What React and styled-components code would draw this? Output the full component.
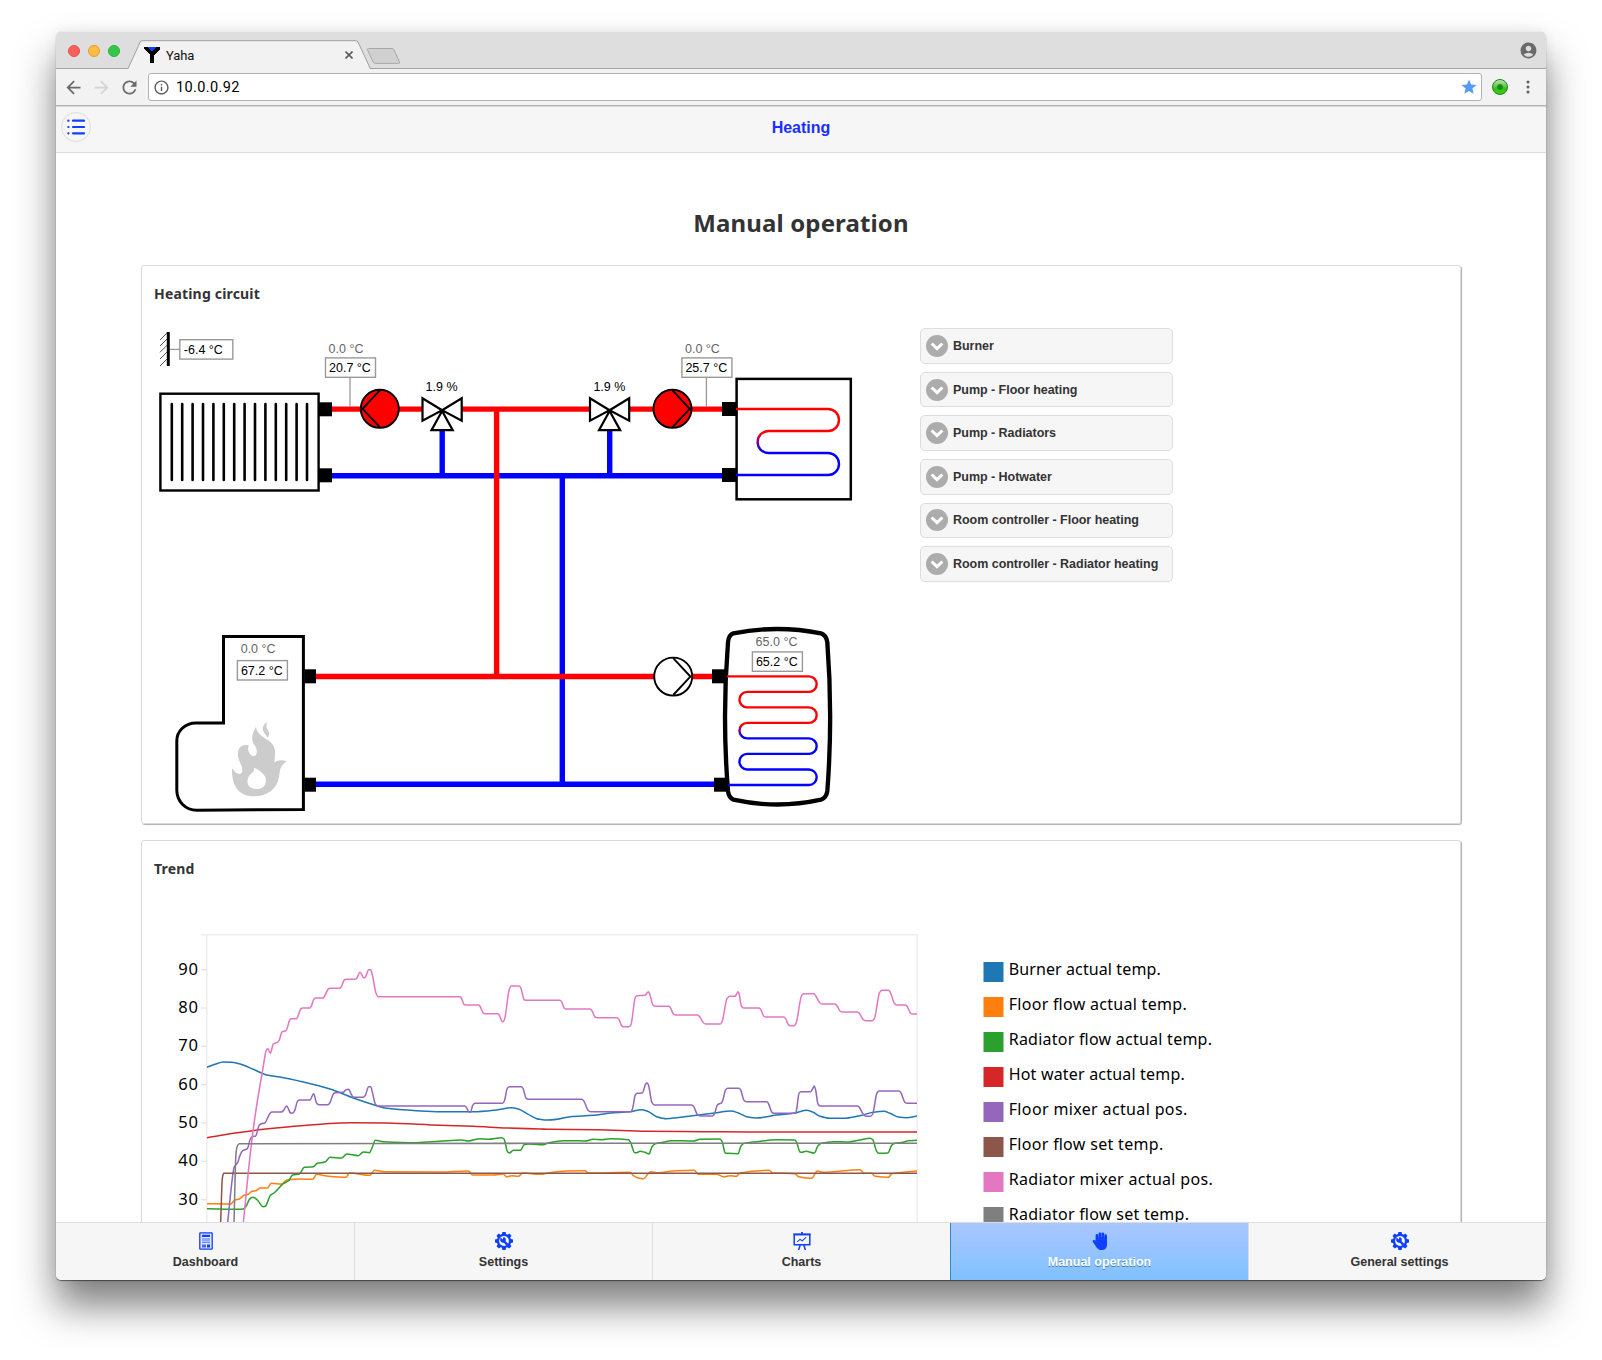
import React from "react";
import styled, { createGlobalStyle } from "styled-components";
import {
  MdArrowBack,
  MdArrowForward,
  MdRefresh,
  MdInfoOutline,
  MdStar,
  MdAccountCircle,
} from "react-icons/md";

const HELVETICA = '"Liberation Sans", Arial, sans-serif';
const LUCIDA = '"Noto Sans", "Open Sans", sans-serif';
const ACCENT = "#0f3fff";

const GlobalStyle = createGlobalStyle`
  html, body { margin: 0; padding: 0; background: #fff; }
  body { overflow: hidden; font-family: ${HELVETICA}; }
  * { box-sizing: border-box; }
  svg { display: block; flex: none; }
`;

const Desktop = styled.div`
  height: 1360px;
  padding: 31px 56px 0;
  background: #fff;
`;

const Window = styled.div`
  display: flex;
  flex-direction: column;
  width: 1490px;
  height: 1249px;
  border-radius: 6px 6px 5px 5px;
  overflow: hidden;
  background: #fff;
  box-shadow: 0 1px 1px 0 rgba(0, 0, 0, 0.5), 0 26px 38px rgba(0, 0, 0, 0.5),
    0 0 14px rgba(0, 0, 0, 0.06);
`;

/* ---------- browser chrome ---------- */

const TabStrip = styled.div`
  display: flex;
  flex: none;
  height: 38px;
  background: #dedede;
  box-shadow: inset 0 -1px 0 #a3a3a3, inset 0 1px 0 #ececec;
`;

const Lights = styled.div`
  display: flex;
  align-items: center;
  gap: 8px;
  padding: 2px 0 0 12px;
  width: 72px;
`;

const Light = styled.span`
  width: 12px;
  height: 12px;
  border-radius: 50%;
  background: ${(p) => p.$fill};
  border: 1px solid ${(p) => p.$edge};
`;

const Tab = styled.div`
  position: relative;
  display: flex;
  align-items: center;
  width: 243px;
  padding: 10px 18px 0 16px;
  font: 13px Roboto, sans-serif;
  color: #111;
`;

const TabShape = styled.svg`
  position: absolute;
  left: 0;
  top: 9px;
`;

const TabTitle = styled.span`
  position: relative;
  flex: 1;
  padding-left: 6px;
  letter-spacing: -0.1px;
`;

const TabIcon = styled.svg`
  position: relative;
`;

const NewTab = styled.svg`
  margin: 16px 0 0 -5px;
`;

const Profile = styled.div`
  display: flex;
  align-items: center;
  margin-left: auto;
  padding: 1px 8px 0 0;
  color: #6a6a6a;
`;

const Toolbar = styled.div`
  display: flex;
  align-items: center;
  flex: none;
  height: 37px;
  padding: 0 8px 0 3px;
  background: #f2f2f2;
  border-bottom: 1px solid #b4b4b4;
`;

const NavButton = styled.div`
  display: flex;
  justify-content: center;
  width: ${(p) => p.$width || 28}px;
  color: ${(p) => (p.$muted ? "#d4d4d4" : "#6a6a6a")};
`;

const Address = styled.div`
  display: flex;
  align-items: center;
  flex: 1;
  height: 28px;
  margin-left: 5px;
  padding: 0 3px 0 4px;
  background: #fff;
  border: 1px solid #b3b3b3;
  border-radius: 3px;
  color: #5c5c5c;
`;

const Url = styled.span`
  flex: 1;
  padding-left: 6px;
  font: 14.5px Roboto, sans-serif;
  letter-spacing: 0.38px;
  color: #000;
`;

const GreenDot = styled.span`
  width: 16px;
  height: 16px;
  border-radius: 50%;
  border: 1px solid #23801c;
  background: radial-gradient(circle at 50% 50%, #178a17 0 2.2px, transparent 3.6px),
    linear-gradient(#b9e8ae 0%, #74c764 40%, #2fc40c 60%, #38cf12 100%);
`;

/* ---------- application ---------- */

const AppHeader = styled.header`
  display: grid;
  grid-template-columns: 45px 1fr 45px;
  align-items: center;
  flex: none;
  height: 47px;
  padding-bottom: 4px;
  background: #f6f6f6;
  border-bottom: 1px solid #ddd;
  border-top: 1px solid #d6d6d6;
`;

const MenuButton = styled.div`
  display: flex;
  align-items: center;
  justify-content: center;
  width: 30px;
  height: 30px;
  margin: 0 0 1px 5px;
  border: 1px solid #ddd;
  border-radius: 50%;
`;

const AppTitle = styled.h1`
  margin: 1px 0 0;
  text-align: center;
  font: bold 16px ${HELVETICA};
  color: #1a2fff;
`;

const Content = styled.main`
  display: flex;
  flex-direction: column;
  gap: 16px;
  flex: 1;
  min-height: 0;
  overflow: hidden;
  padding: 0 85px;
`;

const PageTitle = styled.h2`
  flex: none;
  height: 96px;
  margin: 0;
  padding-top: 53px;
  text-align: center;
  font: bold 24px/33px ${LUCIDA};
  letter-spacing: 0.13px;
  color: #333;
`;

const Panel = styled.section`
  flex: none;
  height: ${(p) => p.$height}px;
  padding: 0 13px;
  border: 1px solid #dadada;
  border-radius: 3px;
  box-shadow: 1px 1px 1px #b0b0b0;
`;

const PanelTitle = styled.h3`
  height: 62px;
  margin: 0 0 0 -1px;
  padding-top: 18px;
  font: bold 14px/20px ${LUCIDA};
  letter-spacing: 0.18px;
  color: #333;
`;

const PanelBody = styled.div`
  display: flex;
  align-items: flex-start;
`;

const Accordion = styled.div`
  display: flex;
  flex-direction: column;
  gap: 8px;
  width: 253px;
  padding-top: 0.3px;
`;

const AccordionItem = styled.div`
  display: flex;
  align-items: center;
  gap: 5px;
  height: 35.6px;
  padding-left: 5px;
  background: #f6f6f6;
  border: 1px solid #ddd;
  border-radius: 5px;
  font: bold 12.5px ${HELVETICA};
  letter-spacing: -0.03px;
  color: #333;
  white-space: nowrap;
`;

const Footer = styled.nav`
  display: grid;
  grid-template-columns: repeat(4, 298px) 1fr;
  flex: none;
  height: 58px;
  padding-left: 1px;
  background: #f6f6f6;
  border-top: 1px solid #ddd;
`;

const FooterItem = styled.div`
  display: flex;
  flex-direction: column;
  align-items: center;
  gap: 5px;
  padding-top: 9px;
  border-right: 1px solid #ddd;
  border-left: ${(p) => (p.$active ? "1px solid #3388cc" : "0")};
  margin-left: ${(p) => (p.$active ? "-1px" : "0")};
  background: ${(p) => (p.$active ? "linear-gradient(#a9c6ff, #80c1ff)" : "transparent")};
  color: ${(p) => (p.$active ? "#fff" : "#333")};
  text-shadow: ${(p) => (p.$active ? "0 1px 0 #3a83bd" : "0 1px 0 #f3f3f3")};
  font: bold 12.5px/14px ${HELVETICA};
  &:last-child { border-right: 0; padding-left: 4px; }
  svg { color: ${ACCENT}; }
`;

/* ---------- icons ---------- */

const ListIcon = () => (
  <svg width="18" height="18" viewBox="0 0 18 18" stroke={ACCENT} strokeLinecap="round">
    {[2.7, 9, 15.3].map((y) => (
      <g key={y}>
        <path d={`M1.3 ${y}H1.5`} strokeWidth="2.2" />
        <path d={`M6 ${y}H17`} strokeWidth="2.2" />
      </g>
    ))}
  </svg>
);

const ChevronBadge = () => (
  <svg width="22" height="22" viewBox="0 0 22 22">
    <circle cx="11" cy="11" r="11" fill="#acacac" />
    <path d="M5.6 8.5 11 13.7 16.4 8.5" fill="none" stroke="#fff" strokeWidth="3" />
  </svg>
);

const DashboardIcon = () => (
  <svg width="14" height="18" viewBox="0 0 14 18">
    <rect x=".8" y=".8" width="12.4" height="16.4" rx=".6" fill="#dfe5ff" stroke={ACCENT} strokeWidth="1.3" />
    <path d="M3 2.8H11V5H3zM8 12.4H11V15.4H8z" fill={ACCENT} />
    <path d="M3 6.4H11V7.4H3zM3 8.4H11V9.3H3zM3 10.3H11V11.1H3zM3 12.4H7V15.4H3z" fill={ACCENT} opacity=".75" />
  </svg>
);

const GearIcon = () => (
  <svg width="18" height="18" viewBox="0 0 18 18">
    {[0, 45, 90, 135].map((a) => (
      <path key={a} d="M7.4 0H10.6L11.2 3V15L10.6 18H7.4L6.8 15V3Z" fill={ACCENT} transform={`rotate(${a} 9 9)`} />
    ))}
    <circle cx="9" cy="9" r="7.2" fill={ACCENT} />
    <circle cx="9" cy="9" r="4.9" fill="#f6f6f6" />
    <path d="M9.3 9.5 13 13.3" stroke={ACCENT} strokeWidth="2.4" />
    <path
      d="M5.7 5.7 7.9 7.6 8.2 5.2C10.4 4.9 11.4 6.9 10.6 8.9 10 11 7.2 11.3 6 9.8 5 8.8 4.8 7.1 5.7 5.7Z"
      fill={ACCENT}
    />
  </svg>
);

const EaselIcon = () => (
  <svg width="18" height="18" viewBox="0 0 18 18" fill="none" stroke={ACCENT}>
    <path d="M1.2 2.6H16.8V12.8H1.2z" strokeWidth="1.5" />
    <path d="M.4 2.4H17.6M9 0V2.4" strokeWidth="1.8" />
    <path d="M7.2 13 5.6 18M10.8 13 12.4 18" strokeWidth="1.5" />
    <path d="M4.2 9.8 7 7.4 9.2 8.8 13 5.4" strokeWidth="1.1" />
  </svg>
);

const HandIcon = () => (
  <svg width="16" height="18" viewBox="0 0 16 18" fill={ACCENT}>
    <rect x="3.6" y="2.1" width="2.7" height="10" rx="1.3" />
    <rect x="6.5" y=".4" width="2.7" height="11" rx="1.3" />
    <rect x="9.4" y=".4" width="2.7" height="11" rx="1.3" />
    <rect x="12.3" y="2.2" width="2.7" height="10" rx="1.3" />
    <path d="M3.6 8.6H15V12.4C15 16 12.9 18 9.8 18 6.9 18 5.6 17 4.3 14.9L.9 9.9C.1 8.5 1.4 7.3 2.7 8.2Z" />
    <path d="M4.2 5H14.8V9.5H4.2Z" opacity=".85" />
  </svg>
);

const Favicon = () => (
  <TabIcon width="16" height="16" viewBox="0 0 16 16" shapeRendering="crispEdges">
    <path d="M0 0H16V2L10 8V16H6V8L0 2Z" fill="#000" />
    <path d="M4 0H12L8 5Z" fill="#1140ff" />
  </TabIcon>
);

/* ---------- heating circuit ---------- */

const Label = ({ x, y, muted, children }) => (
  <text x={x} y={y} fontFamily={HELVETICA} fontSize="12.5" fill={muted ? "#666" : "#000"}>
    {children}
  </text>
);

const Reading = ({ x, y, w = 50, textDx = 4, children }) => (
  <g>
    <rect x={x} y={y} width={w} height="19.4" fill="#fff" stroke="#999" strokeWidth="1.4" />
    <Label x={x + textDx - 0.5} y={y + 14.2}>
      {children}
    </Label>
  </g>
);

const Connector = ({ x, y, w = 14 }) => <rect x={x} y={y - 7} width={w} height="14" fill="#000" />;

const Pump = ({ x, y, on, left }) => (
  <g transform={`translate(${x} ${y})`} stroke="#000" strokeWidth="1.9">
    <circle r="19" fill={on ? "#f00" : "#fff"} />
    <path d="M0 -18.4 17.2 0 0 18.4" fill="none" transform={left ? "scale(-1 1)" : undefined} />
  </g>
);

const Valve = ({ x, y }) => (
  <g transform={`translate(${x} ${y})`} stroke="#000" strokeWidth="2.2" fill="#fff">
    <path d="M-19.6 -11.3V11.1L0 .7ZM19.6 -11.3V11.1L0 .7ZM0 1.5-10.6 20.7H10.6Z" />
  </g>
);

const coil = (start, left, right, ys) => {
  let d = `M${start} ${ys[0]}`;
  for (let i = 0; i < ys.length - 1; i += 1) {
    const r = (ys[i + 1] - ys[i]) / 2;
    d +=
      i % 2 === 0
        ? `H${right}a${r} ${r} 0 0 1 0 ${2 * r}`
        : `H${left}a${r} ${r} 0 0 0 0 ${2 * r}`;
  }
  return `${d}H${start}`;
};

const Circuit = () => (
  <svg width="765" height="494" viewBox="155 328 765 494" fill="none">
    <defs>
      <linearGradient id="floorFade" gradientUnits="userSpaceOnUse" x1="0" y1="431" x2="0" y2="453">
        <stop offset="0.1" stopColor="#f00" />
        <stop offset="0.9" stopColor="#00f" />
      </linearGradient>
      <linearGradient id="tankFade" gradientUnits="userSpaceOnUse" x1="0" y1="723" x2="0" y2="738.4">
        <stop offset="0.1" stopColor="#f00" />
        <stop offset="0.9" stopColor="#00f" />
      </linearGradient>
    </defs>

    <g stroke="#555" strokeWidth="1">
      {[340, 346, 352.3, 359, 366].map((y) => (
        <path key={y} d={`M160 ${y}l7.5 -7.5`} />
      ))}
    </g>
    <path d="M168.3 332V366" stroke="#000" strokeWidth="3" />
    <path d="M170 349.4H180" stroke="#999" strokeWidth="1.3" />
    <Reading x={179.8} y={339.7} w={53} textDx={4.5}>
      -6.4 °C
    </Reading>

    <g strokeWidth="5.4" stroke="#00f">
      <path d="M332 475.8H723M442.2 430V476M609.7 430V476M562.3 476V784.4M316 784.3H715" />
    </g>
    <g strokeWidth="5.4" stroke="#f00">
      <path d="M332 409.1H423M461 409.1H590M629 409.1H723M496.6 409.1V676.5M316 676.5H713" />
    </g>

    <rect x="160.4" y="393.7" width="158.2" height="96.8" stroke="#000" strokeWidth="2.4" />
    <g stroke="#000" strokeWidth="2.6" strokeLinecap="round">
      {Array.from({ length: 14 }, (_, i) => (
        <path key={i} d={`M${171.8 + i * 10.4} 404V480`} />
      ))}
    </g>
    <Connector x={319} y={409.3} w={13} />
    <Connector x={319} y={475.3} w={13} />

    <path d="M350 377V407M706.4 377V407" stroke="#999" strokeWidth="1.3" />
    <Label x={328.6} y={353} muted>0.0 °C</Label>
    <Reading x={325.5} y={357.9}>20.7 °C</Reading>
    <Pump x={379.8} y={408.8} on left />
    <Valve x={442.1} y={409.5} />
    <Label x={425.6} y={391}>1.9 %</Label>

    <Label x={593.4} y={391}>1.9 %</Label>
    <Valve x={609.6} y={409.5} />
    <Pump x={672.5} y={408.8} on />
    <Label x={685} y={353} muted>0.0 °C</Label>
    <Reading x={681.9} y={357.9}>25.7 °C</Reading>

    <rect x="736.6" y="378.9" width="114.2" height="120.4" stroke="#000" strokeWidth="2.5" />
    <path d={coil(736, 768.6, 828, [409, 431, 453, 475])} stroke="url(#floorFade)" strokeWidth="2.4" />
    <Connector x={722} y={409} />
    <Connector x={722} y={475} />

    <path
      d="M223.5 636.5H303.4V809.5L197 810.2C185 810.2 176.8 801 176.8 790V741C176.8 731 185 723 196 723H223.5Z"
      stroke="#000"
      strokeWidth="3"
    />
    <Label x={240.7} y={653} muted>0.0 °C</Label>
    <Reading x={237.4} y={660.6}>67.2 °C</Reading>
    <Connector x={304.5} y={676.3} w={11.5} />
    <Connector x={304.5} y={784.7} w={11.5} />
    <g transform="translate(150 610) scale(.33333)">
      <path
        fill="#ccc"
        d="M318 350C318 366 336 380 353 390C372 402 377 416 375 436L373 458C381 449 396 449 411 453C391 468 391 474 387 500C382 536 352 559 312 559C270 559 244 532 246 474C253 486 264 494 272 491C280 487 277 470 270 457C262 442 262 424 268 414C275 405 286 403 296 406C291 421 299 438 312 438C324 435 322 417 314 406C302 392 305 372 318 350Z"
      />
      <path fill="#ccc" d="M351 337C338 344 336 358 341 366C346 374 351 378 352 383C360 376 358 366 353 360C348 353 349 346 351 337Z" />
      <path fill="#fff" d="M312 473C314 487 303 489 296 500C288 514 292 537 320 537C348 537 352 512 344 498C338 487 326 478 312 473Z" />
    </g>

    <Pump x={673.2} y={676.6} />
    <g transform="translate(600 610) scale(.33333)">
      <path
        stroke="#000"
        strokeWidth="13"
        d="M400 70Q532 44 663 70Q679 75 682 97Q699 320 682 543Q679 564 663 569Q532 598 400 569Q386 562 384 543Q366 320 384 97Q386 75 400 70Z"
      />
    </g>
    <path
      d={coil(727, 747.2, 808.9, [676.4, 691.9, 707.4, 722.9, 738.4, 753.9, 769.5, 785])}
      stroke="url(#tankFade)"
      strokeWidth="2.4"
    />
    <Connector x={712} y={676.3} />
    <Connector x={714} y={784.7} />
    <Label x={755.6} y={645.8} muted>65.0 °C</Label>
    <Reading x={752.4} y={651.9}>65.2 °C</Reading>
  </svg>
);

/* ---------- trend chart ---------- */

/* Each series is sampled in thirds of a pixel; the second list continues the first. */
const SPLIT = 1170;
const SERIES = [
  {
    color: "#1f77b4",
    a: "201,442 225,433 250,426 275,427 300,432 340,448 380,465 420,471 490,486 570,507 640,534 710,557 735,564 830,572 900,575 1000,575 1075,569 1115,563 1135,567 1165,583 1190,596",
    b: "30,598 52,600 80,598 120,590 190,586 240,579 300,575 333,569 353,574 380,590 410,596 440,593 500,586 560,578 603,573 625,579 650,590 680,594 710,590 740,585 790,580 828,571 848,576 870,589 900,595 940,595 990,587 1030,577 1062,574 1080,580 1105,591 1130,593 1161,588",
  },
  {
    color: "#ff7f0e",
    a: "201,851 272,852 285,840 298,837 312,826 325,823 336,814 348,812 360,804 382,804 394,790 425,792 440,780 480,777 518,778 530,763 560,768 618,772 628,759 690,766 703,751 735,755 900,756 985,753 998,765 1060,765 1090,762 1100,771 1115,767 1135,769 1148,759",
    b: "30,763 60,758 110,753 165,752 175,759 300,757 310,767 322,773 340,776 362,755 380,758 440,752 493,751 505,763 560,763 582,771 600,767 620,769 630,759 718,751 728,759 795,761 806,770 845,775 862,753 880,757 990,749 1003,760 1025,760 1035,769 1075,772 1085,761 1161,753",
  },
  {
    color: "#2ca02c",
    a: "201,866 300,868 312,866 320,856 328,838 338,832 350,838 370,860 376,859 382,848 391,826 402,819 430,791 446,782 458,765 478,762 493,742 520,740 532,730 555,726 570,712 605,714 620,702 655,707 670,696 688,698 696,684 706,661 730,665 830,668 900,664 965,660 985,663 1020,656 1045,658 1085,653 1092,657 1102,694 1108,699 1120,691 1142,691 1152,674 1165,672",
    b: "30,674 40,674 55,669 100,662 130,662 165,663 190,658 215,659 240,656 296,659 302,668 314,698 320,698 330,694 345,697 357,702 366,680 376,671 400,667 425,662 490,663 510,658 570,657 576,664 586,699 592,700 624,701 633,678 642,670 680,665 740,659 795,660 801,670 810,696 816,697 828,694 853,699 864,677 874,670 910,665 955,666 990,660 1020,655 1028,659 1040,694 1046,700 1074,699 1085,676 1095,670 1120,667 1135,662 1161,661",
  },
  {
    color: "#d62728",
    a: "201,653 280,640 370,628 450,620 550,612 630,608 740,609 900,616 1000,619 1100,624",
    b: "30,627 60,628 200,629 350,634 520,635 660,636 1161,636",
  },
  {
    color: "#9467bd",
    a: "263,908 279,760 283,740 293,728 300,706 308,692 322,686 330,660 336,650 347,648 358,615 364,611 374,609 390,580 396,576 424,576 431,571 439,558 443,562 450,577 455,580 460,578 464,572 473,543 479,540 510,540 521,521 530,550 536,554 564,554 569,550 581,521 587,518 610,517 618,509 626,508 631,517 639,531 645,532 670,532 676,526 686,500 692,500 698,520 706,552 713,558 974,558 979,562 988,577 992,576 998,556 1005,550 1088,550 1093,543 1102,505 1108,500 1144,500 1149,505 1158,534 1164,538",
    b: "30,538 155,538 161,542 175,572 182,575 302,575 307,568 316,525 322,520 337,519 347,492 351,489 355,494 366,548 373,555 486,555 491,560 503,585 510,588 547,588 553,582 562,555 568,551 573,550 577,545 587,509 593,505 627,505 632,510 642,541 648,545 711,545 715,550 726,577 732,580 795,580 799,573 807,520 813,515 842,515 848,506 853,498 857,510 864,552 870,558 984,558 989,563 1001,585 1007,589 1022,589 1028,582 1041,519 1047,513 1107,513 1112,517 1125,547 1132,550 1161,550",
  },
  { color: "#8c564b", a: "242,908 247,775 251,760 300,760", b: "30,760 1161,760" },
  {
    color: "#e377c2",
    a: "310,908 331,700 345,590 368,450 380,388 384,386 391,400 400,372 404,370 412,367 417,362 426,336 438,332 450,299 455,296 469,296 472,293 483,266 488,264 509,264 513,260 522,237 527,234 549,234 553,230 564,208 569,205 599,205 603,202 613,180 618,178 646,178 650,175 660,157 672,174 677,170 686,149 692,149 697,165 709,222 715,230 960,230 964,234 972,253 977,255 1016,255 1020,259 1030,279 1035,281 1073,281 1077,284 1088,306 1093,300 1108,208 1114,198 1138,198 1143,205 1152,238 1158,241",
    b: "30,241 90,241 95,245 103,265 108,267 180,267 185,271 195,291 201,293 262,293 267,298 275,317 280,320 297,320 303,314 316,232 322,227 345,226 355,215 359,222 369,255 376,259 416,259 421,263 431,283 437,285 502,285 508,289 521,309 527,312 571,312 576,306 591,236 599,229 615,229 620,222 624,215 627,220 634,258 641,264 687,264 692,268 702,289 708,291 762,291 767,296 776,315 781,317 792,317 798,310 815,226 821,221 851,221 856,226 870,249 876,252 914,252 920,256 931,274 938,276 983,276 988,280 1000,299 1006,302 1027,302 1033,296 1049,217 1056,211 1076,211 1081,217 1093,250 1100,255 1127,255 1132,260 1142,280 1148,282 1161,282",
  },
  { color: "#7f7f7f", a: "282,908 288,700 292,678 298,671 320,671", b: "30,670 1161,670" },
];

const LEGEND = [
  ["Burner actual temp.", 152],
  ["Floor flow actual temp.", 178],
  ["Radiator flow actual temp.", 203.3],
  ["Hot water actual temp.", 176],
  ["Floor mixer actual pos.", 178.5],
  ["Floor flow set temp.", 154.5],
  ["Radiator mixer actual pos.", 204],
  ["Radiator flow set temp.", 180.3],
];

const parse = (list, shift) =>
  list.split(" ").map((pair) => {
    const [x, y] = pair.split(",").map(Number);
    return [x + shift, y];
  });

/* Monotone cubic interpolation. */
const monotonePath = (pts) => {
  const n = pts.length;
  const slope = [];
  for (let i = 0; i < n - 1; i += 1) {
    slope.push((pts[i + 1][1] - pts[i][1]) / (pts[i + 1][0] - pts[i][0]));
  }
  const tangent = pts.map((_, i) => {
    if (i === 0) return slope[0];
    if (i === n - 1) return slope[n - 2];
    const [p, q] = [slope[i - 1], slope[i]];
    if (p * q <= 0) return 0;
    return (2 * p * q) / (p + q);
  });
  let d = `M${pts[0][0]} ${pts[0][1]}`;
  for (let i = 0; i < n - 1; i += 1) {
    const [x0, y0] = pts[i];
    const [x1, y1] = pts[i + 1];
    const h = (x1 - x0) / 3;
    d += `C${x0 + h} ${(y0 + tangent[i] * h).toFixed(2)} ${x1 - h} ${(y1 - tangent[i + 1] * h).toFixed(2)} ${x1} ${y1}`;
  }
  return d;
};

const TrendChart = () => (
  <svg width="1290" height="320" viewBox="155 903 1290 320" fill="none">
    <path d="M201 934.7H917.2V1223M206.8 934.7V1223" stroke="#eee" strokeWidth="1.6" />
    {[90, 80, 70, 60, 50, 40, 30].map((value, i) => {
      const y = 969.7 + i * 38.32;
      return (
        <g key={value}>
          <path d={`M201 ${y}H207`} stroke="#e4e4e4" strokeWidth="1.3" />
          <text x="198" y={y + 5.1} textAnchor="end" fontFamily={LUCIDA} fontSize="16.6" textLength="19.8" fill="#000">
            {value}
          </text>
        </g>
      );
    })}
    <g transform="translate(140 920) scale(.33333)" strokeWidth="4.6" strokeLinejoin="round">
      {SERIES.map((s) => (
        <path key={s.color} stroke={s.color} d={monotonePath([...parse(s.a, 0), ...parse(s.b, SPLIT)])} />
      ))}
    </g>
    {LEGEND.map(([name, width], i) => (
      <g key={name}>
        <rect x="983.5" y={962 + i * 35} width="20" height="20" fill={SERIES[i].color} />
        <text x="1008.7" y={975 + i * 35} fontFamily={LUCIDA} fontSize="16" textLength={width} fill="#000">
          {name}
        </text>
      </g>
    ))}
  </svg>
);

/* ---------- page ---------- */

const CONTROLS = [
  "Burner",
  "Pump - Floor heating",
  "Pump - Radiators",
  "Pump - Hotwater",
  "Room controller - Floor heating",
  "Room controller - Radiator heating",
];

const TABS = [
  { label: "Dashboard", icon: <DashboardIcon /> },
  { label: "Settings", icon: <GearIcon /> },
  { label: "Charts", icon: <EaselIcon /> },
  { label: "Manual operation", icon: <HandIcon />, active: true },
  { label: "General settings", icon: <GearIcon /> },
];

export default function App() {
  return (
    <Desktop>
      <GlobalStyle />
      <Window>
        <TabStrip>
          <Lights>
            <Light $fill="#fc605b" $edge="#e2514c" />
            <Light $fill="#fdbc40" $edge="#e0a033" />
            <Light $fill="#34c84a" $edge="#2cb13f" />
          </Lights>
          <Tab>
            <TabShape width="243" height="30" viewBox="0 0 243 30">
              <path d="M0 29.5V28.5L12.2 2Q12.8.7 14 .7H228Q229.3.7 230 2L242 28.5V30H0Z" fill="#f2f2f2" />
              <path d="M0 28.6L12.2 2Q12.8.7 14 .7H228Q229.3.7 230 2L242.3 28.6" fill="none" stroke="#a0a0a0" />
            </TabShape>
            <Favicon />
            <TabTitle>Yaha</TabTitle>
            <TabIcon width="8" height="8" viewBox="0 0 8 8">
              <path d="M.5.5 7.5 7.5M7.5.5.5 7.5" stroke="#5a5a5a" strokeWidth="1.6" />
            </TabIcon>
          </Tab>
          <NewTab width="36" height="18" viewBox="0 0 36 18">
            <path
              d="M2.4 1.5H26Q27.4 1.5 28 2.8L33.4 14.8Q34 16.4 32.5 16.4H9.5Q7.8 16.4 7 14.9L1.6 3Q1 1.5 2.4 1.5Z"
              fill="#d0d0d0"
              stroke="#a8a8a8"
            />
          </NewTab>
          <Profile>
            <MdAccountCircle size={19} />
          </Profile>
        </TabStrip>
        <Toolbar>
          <NavButton>
            <MdArrowBack size={21} />
          </NavButton>
          <NavButton $muted>
            <MdArrowForward size={21} />
          </NavButton>
          <NavButton>
            <MdRefresh size={21} />
          </NavButton>
          <Address>
            <MdInfoOutline size={17} />
            <Url>10.0.0.92</Url>
            <MdStar size={18} color="#549bf7" />
          </Address>
          <NavButton $width={36}>
            <GreenDot />
          </NavButton>
          <NavButton $width={20}>
            <svg width="4" height="14" viewBox="0 0 4 14" fill="#5f5f5f">
              <circle cx="2" cy="2" r="1.5" />
              <circle cx="2" cy="7" r="1.5" />
              <circle cx="2" cy="12" r="1.5" />
            </svg>
          </NavButton>
        </Toolbar>
        <AppHeader>
          <MenuButton>
            <ListIcon />
          </MenuButton>
          <AppTitle>Heating</AppTitle>
        </AppHeader>
        <Content>
          <PageTitle>Manual operation</PageTitle>
          <Panel $height={559}>
            <PanelTitle>Heating circuit</PanelTitle>
            <PanelBody>
              <Circuit />
              <Accordion>
                {CONTROLS.map((name) => (
                  <AccordionItem key={name}>
                    <ChevronBadge />
                    {name}
                  </AccordionItem>
                ))}
              </Accordion>
            </PanelBody>
          </Panel>
          <Panel $height={640}>
            <PanelTitle>Trend</PanelTitle>
            <PanelBody>
              <TrendChart />
            </PanelBody>
          </Panel>
        </Content>
        <Footer>
          {TABS.map((tab) => (
            <FooterItem key={tab.label} $active={tab.active}>
              {tab.icon}
              {tab.label}
            </FooterItem>
          ))}
        </Footer>
      </Window>
    </Desktop>
  );
}
